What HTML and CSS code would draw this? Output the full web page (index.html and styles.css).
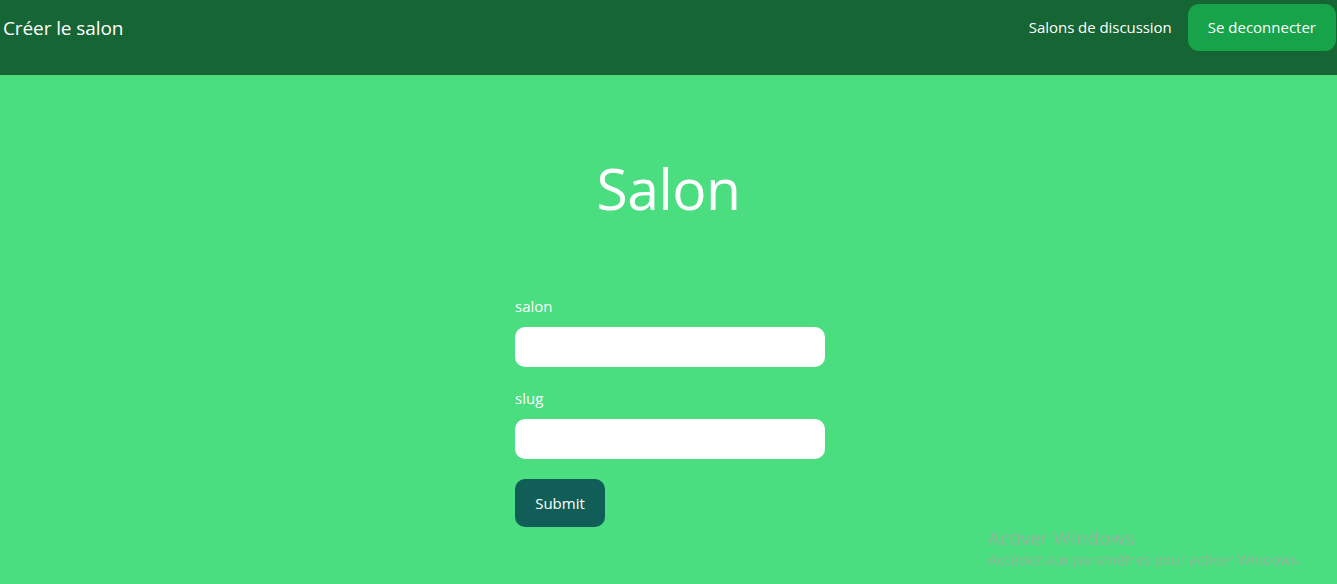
FILE: index.html
```html
<!DOCTYPE html>
<html lang="fr">
<head>
<meta charset="utf-8">
<title>Créer le salon</title>
<link rel="stylesheet" href="styles.css">
</head>
<body>
<nav class="navbar">
  <a class="brand" href="#">Créer le salon</a>
  <div class="nav-links">
    <a class="nav-link" href="#">Salons de discussion</a>
    <a class="nav-btn" href="#">Se deconnecter</a>
  </div>
</nav>
<main class="main">
  <h1 class="title">Salon</h1>
  <form class="form">
    <label class="label" for="salon">salon</label>
    <input class="input" id="salon" type="text">
    <label class="label" for="slug">slug</label>
    <input class="input" id="slug" type="text">
    <button class="submit" type="button">Submit</button>
  </form>
</main>
<div class="watermark">
  <div class="wm-title">Activer Windows</div>
  <div class="wm-sub">Accédez aux paramètres pour activer Windows.</div>
</div>
</body>
</html>
```
FILE: styles.css
```css
html, body {
  margin: 0;
  height: 100%;
}
body {
  background: #4ade80;
  font-family: "Open Sans", "Noto Sans", sans-serif;
  color: #fff;
  overflow: hidden;
}
a { color: #fff; text-decoration: none; }
.navbar {
  background: #166534;
  height: 75px;
  box-sizing: border-box;
  display: flex;
  justify-content: space-between;
  align-items: flex-start;
  padding: 3px 1px 0 3px;
}
.brand {
  font-size: 19px;
  line-height: 50px;
  letter-spacing: -0.1px;
}
.nav-links {
  display: flex;
  align-items: center;
  gap: 16px;
}
.nav-link {
  font-size: 15px;
  line-height: 48px;
  letter-spacing: -0.05px;
}
.nav-btn {
  background: #16a34a;
  border-radius: 11px;
  font-size: 15px;
  line-height: 21px;
  padding: 13px 20px;
}
.main {
  display: flex;
  flex-direction: column;
  align-items: center;
}
.title {
  font-size: 57px;
  font-weight: 400;
  margin: 73px 0 0;
  line-height: 80px;
  letter-spacing: -0.5px;
}
.form {
  width: 310px;
  display: flex;
  flex-direction: column;
  align-items: flex-start;
  margin-top: 68px;
  margin-left: 3px;
}
.label {
  font-size: 15px;
  line-height: 20px;
  margin-bottom: 11px;
}
.input {
  width: 100%;
  height: 40px;
  box-sizing: border-box;
  border: none;
  border-radius: 10px;
  background: #fff;
  margin: 0 0 21px;
  outline: none;
}
.submit {
  margin-top: -1px;
  background: #115e59;
  color: #fff;
  border: none;
  border-radius: 10px;
  font-family: inherit;
  font-size: 15px;
  width: 90px;
  height: 48px;
  padding: 0;
}
.watermark {
  position: fixed;
  left: 988px;
  top: 526px;
  color: rgba(165, 170, 165, 0.8);
  font-family: "Open Sans", sans-serif;
}
.wm-title {
  font-size: 19px;
  line-height: 24px;
}
.wm-sub {
  font-size: 14px;
  line-height: 20px;
  letter-spacing: 0.1px;
}
```
